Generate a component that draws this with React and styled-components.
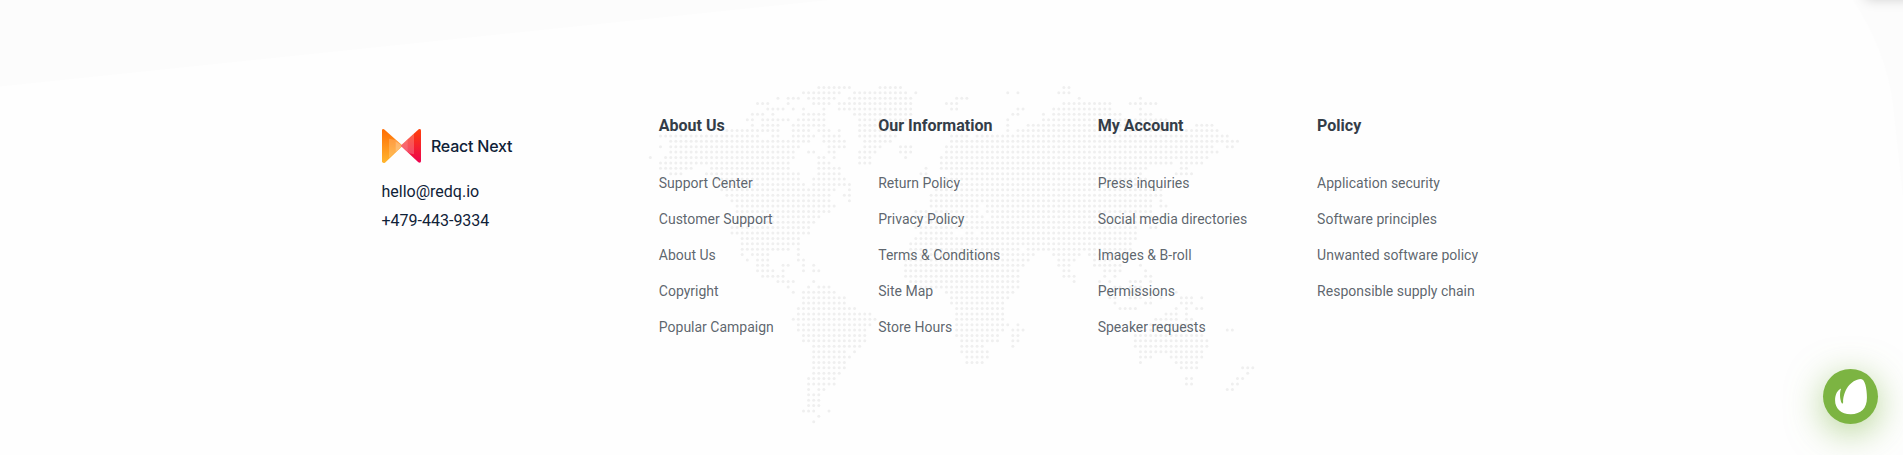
import React from 'react';
import styled, { createGlobalStyle } from 'styled-components';

const GlobalStyle = createGlobalStyle`
  * { box-sizing: border-box; }
  body { margin: 0; background: #fefefe; font-family: Roboto, "Liberation Sans", sans-serif; overflow: hidden; }
`;

const Footer = styled.footer`
  position: relative;
  height: 455px;
  overflow: hidden;
  padding-top: 115px;
`;
const Backdrop = styled.svg`
  position: absolute;
  inset: 0;
  width: 1903px;
  height: 455px;
`;
const Container = styled.div`
  position: relative;
  width: 1140px;
  margin: 0 auto;
  display: flex;
  align-items: flex-start;
`;
const Brand = styled.div`
  flex: 0 0 277.3px;
  padding-top: 14px;
`;
const Logo = styled.a`
  display: flex;
  align-items: center;
  gap: 10.4px;
  height: 34px;
  margin-bottom: 14px;
`;
const LogoMark = styled.svg`
  width: 39px;
  height: 34px;
`;
const LogoText = styled.span`
  font: 500 16px/20px Inter, sans-serif;
  letter-spacing: -0.22px;
  color: #0f2137;
`;
const Contact = styled.p`
  margin: 0;
  font-size: 16px;
  line-height: 29px;
  color: #0f2137;
`;
const Columns = styled.div`
  display: grid;
  flex: none;
  grid-template-columns: repeat(4, 219.45px);
`;
const Title = styled.h3`
  margin: 0 0 36px;
  font-size: 16px;
  font-weight: 700;
  line-height: 22px;
  color: #343d48;
`;
const Links = styled.ul`
  list-style: none;
  margin: 0;
  padding: 0;
`;
const LinkItem = styled.li`
  height: 20px;
  margin-bottom: 16px;
  font-size: 14px;
  line-height: 20px;
  color: rgba(52, 61, 72, 0.8);
  white-space: nowrap;
`;
const FloatingButton = styled.button`
  position: absolute;
  left: 1823px;
  top: 369px;
  width: 55px;
  height: 55px;
  padding: 0;
  border: 0;
  border-radius: 50%;
  background: #7cb442;
  box-shadow: 0 8px 36px rgba(124, 180, 66, 0.58);
`;
const ButtonIcon = styled.svg`
  display: block;
  width: 55px;
  height: 55px;
`;
const CornerShadow = styled.div`
  position: absolute;
  top: -40px;
  left: 1866px;
  width: 60px;
  height: 39px;
  box-shadow: 0 0 12px rgba(0, 0, 0, 0.2);
`;

/* Dotted world map: one string per row, listing filled column ranges. */
const mapRows = [
  '33-39 45-49 81-82',
  '30-37 40-50 52 70 72 80-82',
  '25 27-29 31-36 39-51 60-62 84 96',
  '21-23 27 32-35 37-51 58-60 81-90 94-99',
  '23-26 28 30 34 37-51 59-60 72-73 79-90 96',
  '20-22 24 30-34 40-51 71-72 77 79-92 96-98',
  '19-20 22-27 29-34 41-50 70 77-101',
  '20 22-25 28-34 41-49 70 74-102 107-110',
  '15-23 24-25 28-31 33-35 37 41-49 70 72-111',
  '2-21 24-25 28-32 34-37 41-48 59-62 64-113',
  '4-31 34-38 42-47 59-115',
  '2 4-29 35-38 42-45 49-51 58-110 113-114',
  '4-28 31-32 35-36 41-44 49-51 58-111',
  '0 3-28 33-34 36 41-43 50 57-109',
  '2-27 33-35 41-43 57-102 104-108',
  '2-8 12-27 33-37 54 57-97 104-105',
  '4-6 11-29 33-37 53-54 59-96 103-106',
  '13-29 32-38 58-97',
  '14-30 32-39 57-98',
  '14-36 39 56-100',
  '15-35 38-39 55-100',
  '16-35 39 55-98 100',
  '17-36 55-64 66-98 100-101',
  '17-35 52-54 56-64 66-98',
  '17-33 52-65 67-98',
  '17-32 52-97',
  '16-31 52-95 98-99',
  '16-31 53-59 62-63 65-95',
  '18-29 52-95',
  '18-29 51-94',
  '18-27 29 51-72 74-94',
  '18 20-23 29 51-75 79-84 86-93',
  '19 21-23 29-30 50-74 80-83 87-90',
  '21-23 26-27 30 32 50-73 80-82 87-92 96',
  '21-24 26 30 32-33 50-72 81-82 89-92 97',
  '22-26 50-72 81-83 89 91 97-98',
  '25-28 32 51-72 83 88 90 94-96 98',
  '27 31 33-35 53-72 88-89 91-92 94-96',
  '28 30-36 58-71 90-92 94-96 98-99 103',
  '30-38 59-70 90-91 94-96 98 100 104-106 108',
  '30-38 59-69 91 97-98 104-106',
  '29-40 60-69 92-95 103 105 107-108',
  '29-43 60-69 101-103 105',
  '28-44 60-69 99-103 105-106',
  '29-43 60-70 72 98-106',
  '29-42 60-69 71-73 96-107 113-114',
  '30-42 60-68 71-72 95-108',
  '30-42 61-68 71-72 95-109',
  '32-41 61-65 71 95-109',
  '32-38 40 61-66 96-108',
  '32-39 62-66 96-98 102-108',
  '32-38 62-65 96 103-107',
  '32-38 104-107 116-118',
  '32-37 117',
  '31-36 105-106 115-116',
  '31-36 105-106 114-115',
  '31 33-34 113-114',
  '31-33',
  '31-33',
  '31-33',
  '30-32 35',
  '33',
  '32',
];

const dots = mapRows.flatMap((row, r) =>
  row.split(' ').flatMap((range) => {
    const [from, to = from] = range.split('-').map(Number);
    return Array.from({ length: to - from + 1 }, (_, i) => ({
      x: 650.3 + (from + i) * 5.106,
      y: 87.4 + r * 5.393,
    }));
  })
);

const columns = [
  { title: 'About Us', links: ['Support Center', 'Customer Support', 'About Us', 'Copyright', 'Popular Campaign'] },
  { title: 'Our Information', links: ['Return Policy', 'Privacy Policy', 'Terms & Conditions', 'Site Map', 'Store Hours'] },
  { title: 'My Account', links: ['Press inquiries', 'Social media directories', 'Images & B-roll', 'Permissions', 'Speaker requests'] },
  { title: 'Policy', links: ['Application security', 'Software principles', 'Unwanted software policy', 'Responsible supply chain'] },
];

export default function App() {
  return (
    <Footer>
      <GlobalStyle />
      <Backdrop viewBox="0 0 1903 455" aria-hidden="true">
        <path d="M0 0H829L0 86.5Z" fill="#fcfcfc" />
        <path d="M1853 0C1875 33 1889 70 1893 105L1903 197V0Z" fill="#fcfcfc" />
        <g fill="#efefef">
          {dots.map((d) => (
            <circle key={`${d.x}-${d.y}`} cx={d.x} cy={d.y} r="1.5" />
          ))}
        </g>
      </Backdrop>
      <CornerShadow />
      <Container>
        <Brand>
          <Logo>
            <LogoMark viewBox="36 57 117 101" preserveAspectRatio="none">
              <defs>
                <linearGradient id="orange" x1="0" y1="0" x2="0" y2="1">
                  <stop stopColor="#ff6d05" />
                  <stop offset="1" stopColor="#ffb62f" />
                </linearGradient>
                <linearGradient id="red" x1="0" y1="0" x2="0" y2="1">
                  <stop stopColor="#ff400a" />
                  <stop offset="1" stopColor="#ec0350" />
                </linearGradient>
              </defs>
              <path d="M36 60Q37 56 42 58L98 107L45 157Q37 160 36 153Z" fill="url(#orange)" />
              <path d="M57 86L77 90L97 107L57 143Z" fill="#fff" opacity=".2" />
              <path d="M77 94L97 107L77 125Z" fill="#fff" opacity=".22" />
              <path d="M153 61Q152 55 146 58L92 107L145 156Q152 160 153 153Z" fill="url(#red)" />
              <path d="M132 71V132L118 129L92 107Z" fill="#fff" opacity=".22" />
              <path d="M113 88V125L92 107Z" fill="#fff" opacity=".12" />
            </LogoMark>
            <LogoText>React Next</LogoText>
          </Logo>
          <Contact>hello@redq.io</Contact>
          <Contact>+479-443-9334</Contact>
        </Brand>
        <Columns>
          {columns.map((column) => (
            <div key={column.title}>
              <Title>{column.title}</Title>
              <Links>
                {column.links.map((link) => (
                  <LinkItem key={link}>{link}</LinkItem>
                ))}
              </Links>
            </div>
          ))}
        </Columns>
      </Container>
      <FloatingButton aria-label="Envato">
        <ButtonIcon viewBox="99 57 164 164">
          <path
            d="M212 87C224 87 230 115 230 143C230 175 212 192 182 192C152 192 135 174 135 150C135 133 142 120 153 115C148 128 149 147 155 159C157 161 159 160 159 157C159 122 181 89 212 87Z"
            fill="#fff"
          />
        </ButtonIcon>
      </FloatingButton>
    </Footer>
  );
}
